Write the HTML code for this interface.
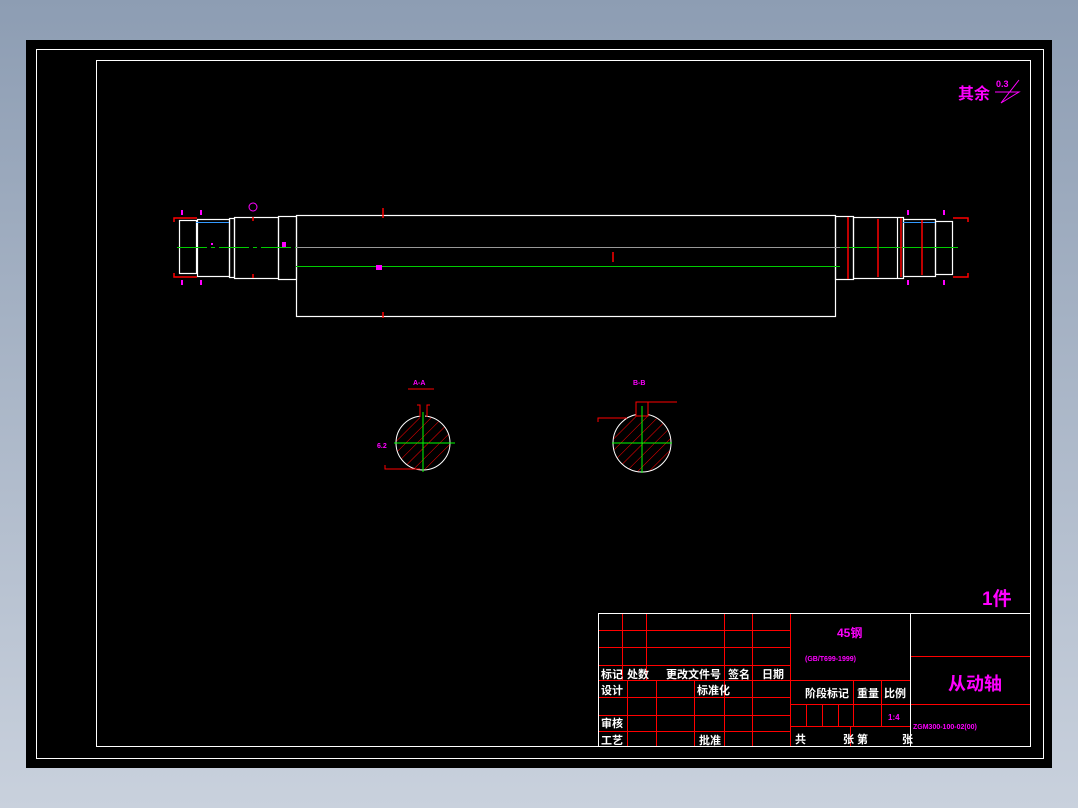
<!DOCTYPE html>
<html><head><meta charset="utf-8"><style>
html,body{margin:0;padding:0;width:1078px;height:808px;overflow:hidden;background:linear-gradient(#8d9db3,#c9d1dd);}
svg{position:absolute;left:0;top:0}
text{font-family:"Liberation Sans","Noto Sans CJK SC",sans-serif;font-weight:bold}
</style></head><body>
<svg width="1078" height="808" viewBox="0 0 1078 808">
<rect x="26" y="40" width="1026" height="728" fill="#000"/>
<g fill="none" stroke="#fff" stroke-width="1">
<rect x="36.5" y="49.5" width="1007" height="709"/>
<rect x="96.5" y="60.5" width="934" height="686"/>
</g>
<!-- shaft -->
<g fill="none" stroke="#fff" stroke-width="1.2">
<rect x="179.5" y="220.5" width="17" height="53"/>
<rect x="197.5" y="219.5" width="32" height="57"/>
<rect x="229.5" y="218.5" width="5" height="59"/>
<rect x="234.5" y="217.5" width="44" height="61"/>
<rect x="278.5" y="216.5" width="18" height="63"/>
<rect x="296.5" y="215.5" width="539" height="101"/>
<rect x="835.5" y="216.5" width="18" height="63"/>
<rect x="853.5" y="217.5" width="50" height="61"/>
<line x1="897.5" y1="217" x2="897.5" y2="278"/>
<rect x="903.5" y="219.5" width="32" height="57"/>
<rect x="935.5" y="221.5" width="17" height="53"/>
</g>
<line x1="177" y1="247.5" x2="296" y2="247.5" stroke="#0c0" stroke-dasharray="30 4 4 4"/>
<line x1="296" y1="247.5" x2="840" y2="247.5" stroke="#999"/>
<line x1="840" y1="247.5" x2="958" y2="247.5" stroke="#0c0"/>
<line x1="296" y1="266.5" x2="840" y2="266.5" stroke="#0c0"/>
<line x1="196" y1="222.5" x2="229" y2="222.5" stroke="#39f"/>
<line x1="903" y1="222.5" x2="935" y2="222.5" stroke="#39f"/>
<g stroke="#f00" stroke-width="1.5">
<line x1="848" y1="217" x2="848" y2="279"/><line x1="878" y1="219" x2="878" y2="277"/>
<line x1="901" y1="218" x2="901" y2="277"/><line x1="922" y1="220" x2="922" y2="275"/>
<line x1="383" y1="208" x2="383" y2="218"/><line x1="383" y1="312" x2="383" y2="318"/>
<polyline points="174,222 174,218 197,218" fill="none"/><polyline points="174,273 174,277 197,277" fill="none"/>
<polyline points="968,222 968,218 953,218" fill="none"/><polyline points="968,273 968,277 953,277" fill="none"/>
<line x1="253" y1="217" x2="253" y2="221"/><line x1="253" y1="274" x2="253" y2="278"/>
<line x1="613" y1="252" x2="613" y2="262"/>
</g>
<g fill="#f0f">
<rect x="181" y="210" width="2" height="5"/><rect x="200" y="210" width="2" height="5"/>
<rect x="181" y="280" width="2" height="5"/><rect x="200" y="280" width="2" height="5"/>
<rect x="907" y="210" width="2" height="5"/><rect x="943" y="210" width="2" height="5"/>
<rect x="907" y="280" width="2" height="5"/><rect x="943" y="280" width="2" height="5"/>
<rect x="282" y="242" width="4" height="5"/><rect x="376" y="265" width="6" height="5"/>
<rect x="211" y="243" width="2" height="2"/>
</g>
<circle cx="253" cy="207" r="4" fill="none" stroke="#f0f"/>
<!-- sections -->
<defs><pattern id="h" width="8" height="8" patternUnits="userSpaceOnUse" patternTransform="rotate(45)"><line x1="0" y1="0" x2="0" y2="8" stroke="#f00" stroke-width="1"/></pattern></defs>
<circle cx="423" cy="443" r="27" fill="url(#h)" stroke="#fff"/>
<rect x="420" y="413" width="5" height="5" fill="#000"/>
<polyline points="417,405 420,405 420,417" fill="none" stroke="#f00"/>
<polyline points="430,405 427,405 427,417" fill="none" stroke="#f00"/>
<line x1="394" y1="443" x2="455" y2="443" stroke="#0f0"/><line x1="423" y1="412" x2="423" y2="472" stroke="#0f0"/>
<polyline points="385,465 385,469 420,469" fill="none" stroke="#f00"/>
<line x1="408" y1="389" x2="434" y2="389" stroke="#f00"/>
<text x="413" y="385" font-size="7" fill="#f0f">A-A</text>
<text x="377" y="448" font-size="7" fill="#f0f">6.2</text>
<circle cx="642" cy="443" r="29" fill="url(#h)" stroke="#fff"/>
<rect x="636" y="402" width="12" height="14" fill="#000" stroke="#f00"/>
<line x1="648" y1="402" x2="677" y2="402" stroke="#f00"/>
<polyline points="598,422 598,418 627,418" fill="none" stroke="#f00"/>
<line x1="612" y1="443" x2="672" y2="443" stroke="#0f0"/><line x1="642" y1="406" x2="642" y2="473" stroke="#0f0"/>
<text x="633" y="385" font-size="7" fill="#f0f">B-B</text>
<!-- roughness -->
<text x="958" y="99" font-size="16" fill="#f0f">其余</text>
<text x="996" y="87" font-size="9" fill="#f0f">0.3</text>
<polyline points="995,92 1019,92 1001,103 1019,80" fill="none" stroke="#f0f"/>
<text x="982" y="605" font-size="19" fill="#f0f">1件</text>
<!-- title block -->
<g stroke="#f00" stroke-width="1" fill="none">
<line x1="598" y1="630.5" x2="790" y2="630.5"/><line x1="598" y1="647.5" x2="790" y2="647.5"/>
<line x1="598" y1="665.5" x2="790" y2="665.5"/><line x1="598" y1="680.5" x2="910" y2="680.5"/>
<line x1="598" y1="697.5" x2="790" y2="697.5"/><line x1="598" y1="715.5" x2="790" y2="715.5"/>
<line x1="598" y1="731.5" x2="790" y2="731.5"/>
<line x1="622.5" y1="613" x2="622.5" y2="680"/><line x1="646.5" y1="613" x2="646.5" y2="680"/>
<line x1="724.5" y1="613" x2="724.5" y2="746"/><line x1="752.5" y1="613" x2="752.5" y2="746"/>
<line x1="627.5" y1="680" x2="627.5" y2="746"/><line x1="656.5" y1="680" x2="656.5" y2="746"/>
<line x1="694.5" y1="680" x2="694.5" y2="746"/>
<line x1="790.5" y1="613" x2="790.5" y2="746"/>
<line x1="790" y1="704.5" x2="1030" y2="704.5"/><line x1="790" y1="726.5" x2="910" y2="726.5"/>
<line x1="853.5" y1="680" x2="853.5" y2="726"/><line x1="881.5" y1="680" x2="881.5" y2="726"/>
<line x1="806.5" y1="704" x2="806.5" y2="726"/><line x1="822.5" y1="704" x2="822.5" y2="726"/><line x1="838.5" y1="704" x2="838.5" y2="726"/>
<line x1="850.5" y1="726" x2="850.5" y2="746"/>
<line x1="910" y1="656.5" x2="1030" y2="656.5"/>
</g>
<g stroke="#fff" fill="none"><rect x="598.5" y="613.5" width="432" height="133"/><line x1="910.5" y1="613" x2="910.5" y2="746"/></g>
<g fill="#fff" font-size="11">
<text x="601" y="678">标记</text><text x="627" y="678">处数</text><text x="666" y="678">更改文件号</text>
<text x="728" y="678">签名</text><text x="762" y="678">日期</text>
<text x="601" y="694">设计</text><text x="697" y="694">标准化</text>
<text x="601" y="727">审核</text><text x="601" y="744">工艺</text><text x="699" y="744">批准</text>
<text x="805" y="697">阶段标记</text><text x="857" y="697">重量</text><text x="884" y="697">比例</text>
<text x="795" y="743">共</text><text x="843" y="743">张</text><text x="857" y="743">第</text><text x="902" y="743">张</text>
</g>
<text x="837" y="637" font-size="12" fill="#f0f" font-weight="normal">45钢</text>
<text x="805" y="661" font-size="7" fill="#f0f">(GB/T699-1999)</text>
<text x="948" y="690" font-size="18" fill="#f0f" font-weight="normal">从动轴</text>
<text x="888" y="720" font-size="8" fill="#f0f">1:4</text>
<text x="913" y="729" font-size="7" fill="#f0f">ZGM300-100-02(00)</text>
</svg>
</body></html>
